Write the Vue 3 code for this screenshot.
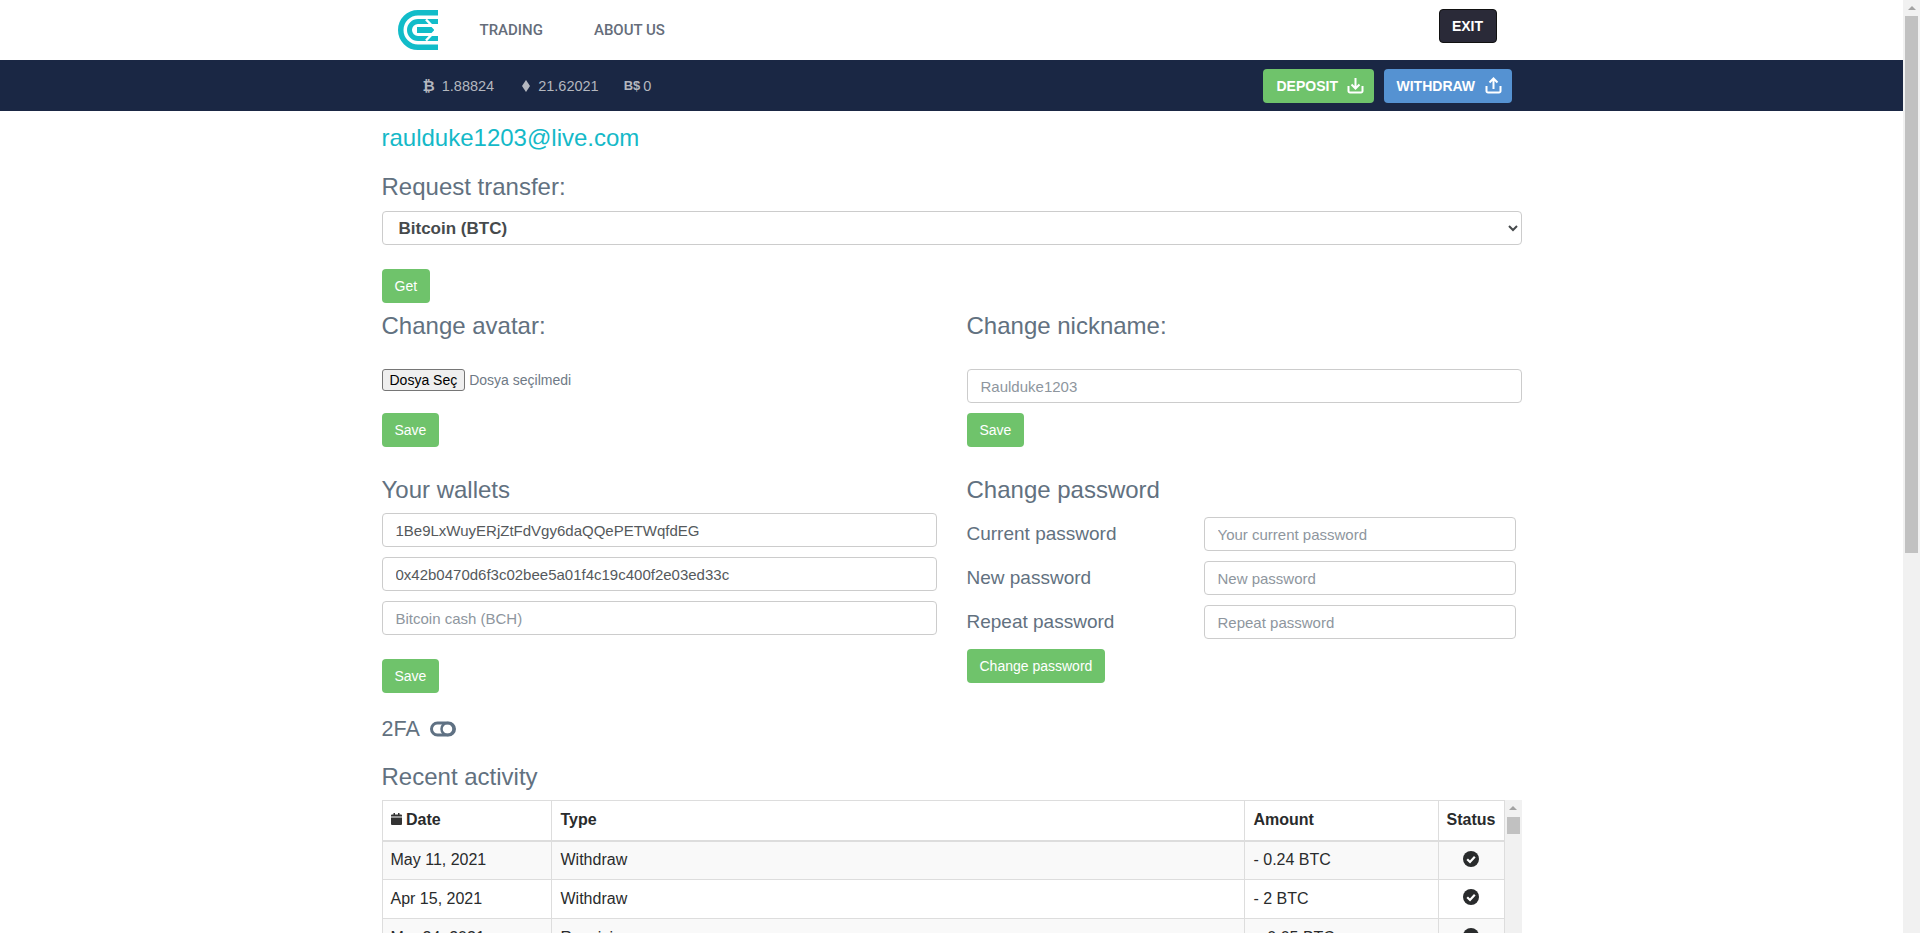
<script setup>
const firstRows = [
  { date: "May 11, 2021", type: "Withdraw", amount: "- 0.24 BTC" },
  { date: "Apr 15, 2021", type: "Withdraw", amount: "- 2 BTC" },
  { date: "Mar 24, 2021", type: "Receiving", amount: "+ 0.05 BTC" },
];
const rows = Array.from({ length: 7 }, (_, i) => firstRows[i % 3]);
</script>

<template>
  <div class="page">
    <header class="top">
      <div class="top__inner">
        <svg class="logo" width="40" height="40" viewBox="0 0 40 40" fill="none" stroke="#12bcc9">
          <path d="M40 2.750H20A17.250 17.250 0 0 0 20 37.250H40" stroke-width="5.500" />
          <path d="M40 11.500H20A8.500 8.500 0 0 0 20 28.500H40" stroke-width="5" />
          <path d="M19 20H36" stroke-width="6" />
          <path d="M28 9.500L38 20L28 30.500" stroke="#fff" stroke-width="2.500" />
        </svg>
        <a class="top__link top__link--first">TRADING</a>
        <a class="top__link">ABOUT US</a>
        <button class="exit">EXIT</button>
      </div>
    </header>

    <div class="balance">
      <div class="balance__inner">
        <span class="coin"><b class="coin__sign">₿</b>1.88824</span>
        <span class="coin coin--eth">
          <svg class="coin__eth" width="8" height="12" viewBox="0 0 8 12" fill="#b4b7bf">
            <path d="M4 0L8 6L4 12L0 6Z" />
          </svg>
          21.62021
        </span>
        <span class="coin"><b class="coin__sign coin__sign--bch">B$</b>0</span>
        <button class="action action--deposit">
          DEPOSIT
          <svg width="17" height="17" viewBox="0 0 17 17" fill="none" stroke="#fff" stroke-width="2">
            <path d="M1.500 9V14A1.500 1.500 0 0 0 3 15.500H14A1.500 1.500 0 0 0 15.500 14V9" />
            <path d="M8.500 1V11M4.500 7.500L8.500 11.500L12.500 7.500" />
          </svg>
        </button>
        <button class="action action--withdraw">
          WITHDRAW
          <svg width="17" height="17" viewBox="0 0 17 17" fill="none" stroke="#fff" stroke-width="2">
            <path d="M1.500 9V14A1.500 1.500 0 0 0 3 15.500H14A1.500 1.500 0 0 0 15.500 14V9" />
            <path d="M8.500 12V2M4.500 5.500L8.500 1.500L12.500 5.500" />
          </svg>
        </button>
      </div>
    </div>

    <main class="main">
      <div class="email">raulduke1203@live.com</div>

      <h3 class="title title--request">Request transfer:</h3>
      <select class="select">
        <option>Bitcoin (BTC)</option>
      </select>
      <button class="btn btn--get">Get</button>

      <div class="columns">
        <div class="col">
          <h3 class="title">Change avatar:</h3>
          <div class="file">
            <span class="file__btn">Dosya Seç</span>
            <span class="file__name">Dosya seçilmedi</span>
          </div>
          <button class="btn btn--avatar">Save</button>

          <h3 class="title title--section">Your wallets</h3>
          <div class="wallets">
            <input class="input" value="1Be9LxWuyERjZtFdVgy6daQQePETWqfdEG" />
            <input class="input" value="0x42b0470d6f3c02bee5a01f4c19c400f2e03ed33c" />
            <input class="input" placeholder="Bitcoin cash (BCH)" />
          </div>
          <button class="btn btn--wallets">Save</button>
        </div>

        <div class="col">
          <h3 class="title">Change nickname:</h3>
          <input class="input input--nick" placeholder="Raulduke1203" />
          <button class="btn btn--nick">Save</button>

          <h3 class="title title--section">Change password</h3>
          <div class="passwords">
            <label class="pass">
              <span class="pass__label">Current password</span>
              <input class="input" placeholder="Your current password" />
            </label>
            <label class="pass">
              <span class="pass__label">New password</span>
              <input class="input" placeholder="New password" />
            </label>
            <label class="pass">
              <span class="pass__label">Repeat password</span>
              <input class="input" placeholder="Repeat password" />
            </label>
          </div>
          <button class="btn btn--pass">Change password</button>
        </div>
      </div>

      <div class="twofa">
        2FA
        <svg width="26" height="16" viewBox="0 0 26 16" fill="none" stroke="#5f7183" stroke-width="3">
          <rect x="1.500" y="2" width="23" height="12" rx="6" />
          <circle cx="17.500" cy="8" r="6" stroke-width="2.500" />
        </svg>
      </div>

      <h3 class="title title--recent">Recent activity</h3>
      <div class="activity">
        <table class="table">
          <thead>
            <tr>
              <th class="table__date">
                <svg width="11" height="12" viewBox="0 0 11 12" fill="#333">
                  <path d="M0 4.500H11V11A1 1 0 0 1 10 12H1A1 1 0 0 1 0 11Z" />
                  <path d="M1 1.500H2.500V0H4V1.500H7V0H8.500V1.500H10A1 1 0 0 1 11 2.500V3.500H0V2.500A1 1 0 0 1 1 1.500Z" />
                </svg>
                Date
              </th>
              <th class="table__type">Type</th>
              <th class="table__amount">Amount</th>
              <th class="table__status">Status</th>
            </tr>
          </thead>
          <tbody>
            <tr v-for="(row, index) in rows" :key="index">
              <td>{{ row.date }}</td>
              <td>{{ row.type }}</td>
              <td>{{ row.amount }}</td>
              <td class="table__icon">
                <svg width="16" height="16" viewBox="0 0 16 16">
                  <circle cx="8" cy="8" r="8" fill="#292b2c" />
                  <path d="M4.200 8.300L7 11L11.800 5.800" fill="none" stroke="#fff" stroke-width="2.200" />
                </svg>
              </td>
            </tr>
          </tbody>
        </table>
        <div class="rail">
          <div class="rail__arrow"></div>
          <div class="rail__thumb rail__thumb--small"></div>
        </div>
      </div>
    </main>

    <div class="rail rail--page">
      <div class="rail__arrow"></div>
      <div class="rail__thumb rail__thumb--page"></div>
    </div>
  </div>
</template>

<style scoped>
* {
  box-sizing: border-box;
}
.page {
  font-family: "Liberation Sans", Arial, sans-serif;
  font-size: 14px;
  color: #292b2c;
  background: #fff;
  padding-right: 17px;
  padding-bottom: 451px;
}
.top {
  height: 60px;
}
.top__inner,
.balance__inner,
.main {
  width: 1140px;
  margin: 0 auto;
}
.top__inner {
  display: flex;
  align-items: center;
  height: 100%;
  padding-left: 16px;
  padding-right: 25px;
}
.logo {
  flex: none;
}
.top__link {
  font-family: Roboto, sans-serif;
  font-size: 15px;
  font-weight: 500;
  color: #656d7a;
  margin-left: 51px;
}
.top__link--first {
  margin-left: 42px;
}
.exit {
  align-self: flex-start;
  margin-top: 9px;
  margin-left: auto;
  width: 58px;
  height: 34px;
  background: #2a2a38;
  border: 1px solid #111;
  border-radius: 4px;
  color: #fff;
  font-family: inherit;
  font-size: 14px;
  font-weight: 700;
}
.balance {
  height: 51px;
  background: #1a2744;
}
.balance__inner {
  display: flex;
  align-items: center;
  height: 100%;
  padding-left: 41px;
  padding-right: 10px;
  color: #b4b7bf;
  font-size: 14.500px;
}
.coin {
  display: flex;
  align-items: center;
  margin-right: 28px;
}
.coin--eth {
  margin-right: 25px;
}
.coin__sign {
  font-family: "DejaVu Sans", sans-serif;
  font-size: 15px;
  margin-right: 7px;
}
.coin__sign--bch {
  font-family: inherit;
  font-size: 13px;
  margin-right: 3px;
}
.coin__eth {
  margin-right: 8px;
}
.action {
  display: flex;
  align-items: center;
  height: 34px;
  border: none;
  border-radius: 4px;
  color: #fff;
  font-family: inherit;
  font-size: 14px;
  font-weight: 700;
}
.action--deposit {
  width: 111px;
  gap: 9px;
  padding-left: 14px;
  margin-left: auto;
  margin-right: 10px;
  background: #6fc36b;
}
.action--withdraw {
  width: 128px;
  gap: 10px;
  padding-left: 13px;
  background: #5592d2;
}
.main {
  padding-top: 9px;
}
.email {
  font-size: 24px;
  line-height: 36px;
  color: #14b9c8;
}
.title {
  margin: 0;
  font-size: 24px;
  font-weight: 400;
  line-height: 36px;
  color: #627180;
}
.title--request {
  margin-top: 13px;
}
.title--section {
  margin-top: 25px;
}
.title--recent {
  margin-top: 12px;
}
.select {
  display: block;
  width: 100%;
  height: 34px;
  margin-top: 6px;
  padding: 0 12px;
  background: #fff;
  border: 1px solid #ccc;
  border-radius: 4px;
  font-family: inherit;
  font-size: 17px;
  font-weight: 700;
  color: #464a4c;
}
.btn {
  display: block;
  height: 34px;
  padding: 0 13px;
  background: #6fc36b;
  border: none;
  border-radius: 4px;
  color: #fff;
  font-family: inherit;
  font-size: 14px;
}
.btn--get {
  margin-top: 24px;
}
.btn--avatar {
  margin-top: 22px;
}
.btn--nick {
  margin-top: 10px;
}
.btn--wallets {
  margin-top: 24px;
}
.btn--pass {
  margin-top: 10px;
}
.columns {
  display: grid;
  grid-template-columns: 555px 555px;
  gap: 30px;
  margin-top: 5px;
}
.file {
  display: flex;
  align-items: center;
  height: 22px;
  margin-top: 25px;
  color: #6f7a86;
  font-size: 14px;
}
.file__btn {
  display: flex;
  align-items: center;
  height: 22px;
  padding: 0 7px;
  background: #efefef;
  border: 1px solid #767676;
  border-radius: 3px;
  color: #000;
  margin-right: 4px;
}
.input {
  display: block;
  width: 100%;
  height: 34px;
  padding: 0 13px;
  background: #fff;
  border: 1px solid #ccc;
  border-radius: 4px;
  font-family: inherit;
  font-size: 15px;
  color: #55595c;
}
.input::placeholder {
  color: #8e969e;
}
.input--nick {
  margin-top: 25px;
}
.wallets {
  display: flex;
  flex-direction: column;
  gap: 10px;
  margin-top: 5px;
}
.passwords {
  display: flex;
  flex-direction: column;
  gap: 10px;
  margin-top: 9px;
  padding-right: 6px;
}
.pass {
  display: flex;
  align-items: center;
}
.pass__label {
  flex: none;
  width: 237px;
  font-size: 19px;
  color: #627180;
}
.twofa {
  display: flex;
  align-items: center;
  gap: 10px;
  height: 36px;
  margin-top: 18px;
  font-size: 21.500px;
  color: #627180;
}
.activity {
  display: flex;
  margin-top: 5px;
}
.table {
  width: 1123px;
  table-layout: fixed;
  border-collapse: collapse;
  border: 1px solid #ddd;
  font-size: 16px;
}
.table th,
.table td {
  padding: 0 9px;
  border: 1px solid #ddd;
  text-align: left;
  vertical-align: middle;
}
.table th:first-child,
.table td:first-child {
  padding-left: 8px;
}
.table th {
  height: 40px;
  border-bottom-width: 2px;
  font-weight: 700;
}
.table td {
  height: 39px;
}
.table tbody tr:nth-child(odd) {
  background: #f9f9f9;
}
.table__date {
  width: 169px;
}
.table__amount {
  width: 194px;
}
.table .table__status {
  width: 66px;
  padding: 0;
  text-align: center;
}
.table .table__icon {
  padding: 0 0 5px;
  text-align: center;
}
.table__icon svg {
  display: inline-block;
  vertical-align: middle;
}
.rail {
  flex: none;
  width: 17px;
  background: #f1f1f1;
  display: flex;
  flex-direction: column;
  align-items: center;
}
.rail--page {
  position: fixed;
  top: 0;
  right: 0;
  bottom: 0;
}
.rail__arrow {
  width: 0;
  height: 0;
  margin-top: 6px;
  border-left: 4px solid transparent;
  border-right: 4px solid transparent;
  border-bottom: 4px solid #a3a3a3;
}
.rail__thumb {
  width: 13px;
  margin-top: 6px;
  background: #c1c1c1;
}
.rail__thumb--small {
  height: 17px;
  margin-top: 7px;
}
.rail__thumb--page {
  height: 537px;
}
</style>
